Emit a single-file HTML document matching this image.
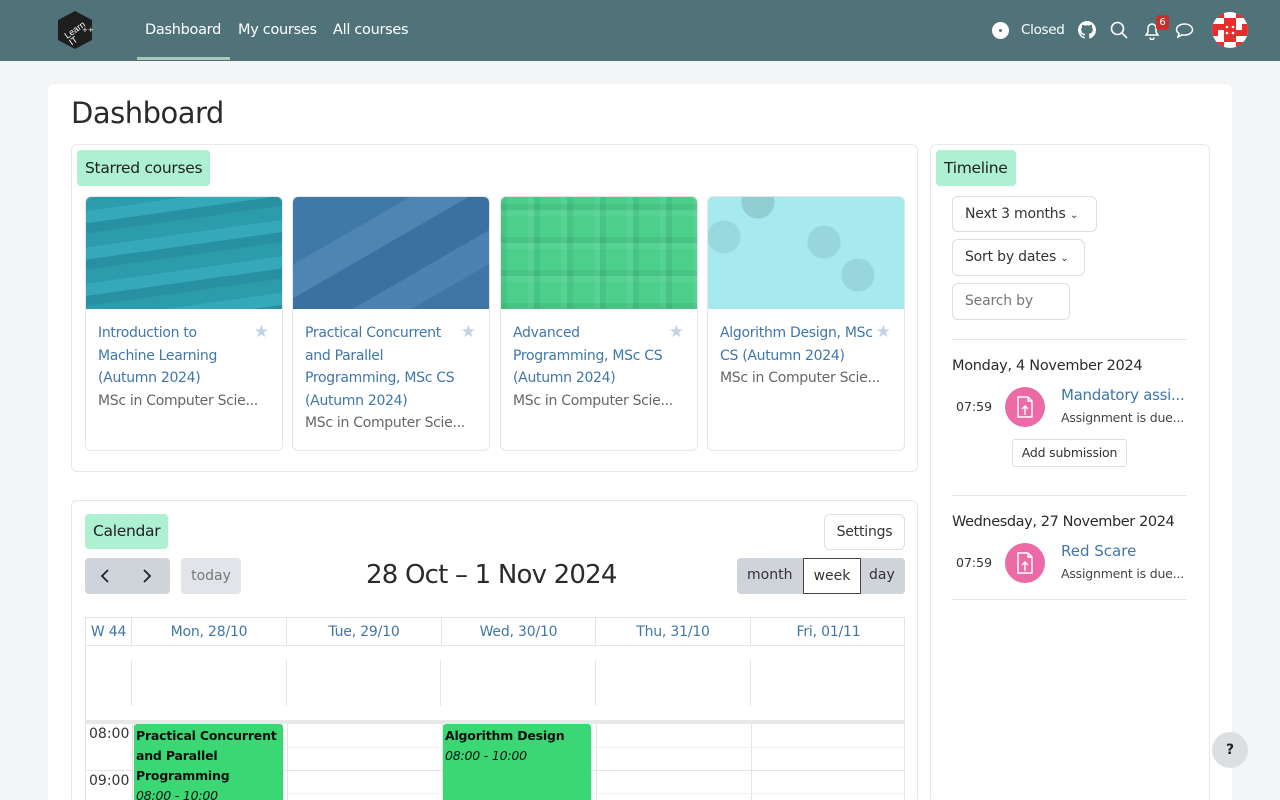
<!DOCTYPE html>
<html style="width:1280px;height:800px;overflow:hidden"><head><meta charset="utf-8"><style>
*{box-sizing:border-box;margin:0;padding:0}
body{width:1280px;height:800px;overflow:hidden;background:#f4f5f6;font-family:"DejaVu Sans","Liberation Sans",sans-serif;color:#333;position:relative;font-size:14px}
.abs{position:absolute}
.nav{left:0;top:0;width:1280px;height:61px;background:#50737a}
.nav a{position:absolute;top:22px;color:#fff;font-size:14.5px;letter-spacing:-.3px}
.main{left:48px;top:84px;width:1184px;height:716px;background:#fff;border-radius:6px 6px 0 0}
.blk{border:1px solid #e8e8e8;border-radius:6px;background:#fff}
.tag{background:#aef0d2;border-radius:4px;font-size:15.5px;color:#222;padding:0 8px;height:36px;line-height:36px;letter-spacing:-.3px}
.card{border:1px solid #e6e6e6;border-radius:6px;overflow:hidden;width:198px;height:255px;top:196px;background:#fff}
.card .img{height:112px}
.card .t{position:absolute;left:12px;top:125px;width:152px;color:#3f77aa;font-size:14px;line-height:22.6px;letter-spacing:-.3px}
.card .s{color:#666;white-space:nowrap}
.star{position:absolute;right:13px;top:125px;color:#bfd3e6;font-size:17px}
.btn{border:1px solid #dedede;border-radius:6px;background:#fff;font-size:14px;letter-spacing:-.2px}
.th{color:#3f77aa;font-size:14px;text-align:center;top:0;height:28px;line-height:28px;border-right:1px solid #e4e4e4;letter-spacing:-.2px}
.ev{background:#3ad774;border-radius:3px;font-size:12.5px;color:#111;padding:2px 2px;line-height:20px;letter-spacing:-.2px}
.ico{width:40px;height:40px;border-radius:50%;background:#ec6aa5}
</style></head><body>
<div class="abs nav">
  <svg class="abs" style="left:55px;top:10px" width="40" height="40" viewBox="0 0 40 40"><polygon points="20,1 37,10 37,30 20,39 3,30 3,10" fill="#1e1e1e"/><text x="8" y="24" font-size="9" fill="#fff" transform="rotate(-35 18 20)" font-family="Liberation Sans">Learn</text><text x="8" y="32" font-size="9" fill="#fff" transform="rotate(-35 18 20)" font-family="Liberation Sans">IT</text><text x="27" y="22" font-size="7" fill="#fff">++</text></svg>
  <a style="left:145px">Dashboard</a><a style="left:238px">My courses</a><a style="left:333px">All courses</a>
  <div class="abs" style="left:137px;top:57px;width:93px;height:3px;background:#a8cbb8"></div>
  <div class="abs" style="left:992px;top:22px;width:17px;height:17px;border-radius:50%;background:#fff"></div>
  <div class="abs" style="left:999px;top:29px;width:3px;height:3px;border-radius:50%;background:#50737a"></div>
  <a style="left:1021px;font-size:13.5px">Closed</a>
  <svg class="abs" style="left:1078px;top:21px" width="18" height="18" viewBox="0 0 16 16"><path fill="#fff" d="M8 0C3.6 0 0 3.6 0 8c0 3.5 2.3 6.5 5.5 7.6.4.1.5-.2.5-.4v-1.4c-2.2.5-2.7-1-2.7-1-.4-.9-.9-1.2-.9-1.2-.7-.5.1-.5.1-.5.8.1 1.2.8 1.2.8.7 1.2 1.9.9 2.3.7.1-.5.3-.9.5-1.1-1.8-.2-3.6-.9-3.6-4 0-.9.3-1.6.8-2.1-.1-.2-.4-1 .1-2.1 0 0 .7-.2 2.2.8.6-.2 1.3-.3 2-.3s1.4.1 2 .3c1.5-1 2.2-.8 2.2-.8.4 1.1.2 1.9.1 2.1.5.6.8 1.3.8 2.1 0 3.1-1.9 3.7-3.6 3.9.3.3.5.8.5 1.5v2.2c0 .2.1.5.6.4C13.7 14.5 16 11.5 16 8c0-4.4-3.6-8-8-8z"/></svg>
  <svg class="abs" style="left:1110px;top:21px" width="18" height="18" viewBox="0 0 18 18" fill="none" stroke="#fff" stroke-width="1.6"><circle cx="7.5" cy="7.5" r="6"/><path d="M12 12l5 5"/></svg>
  <svg class="abs" style="left:1143px;top:21px" width="18" height="19" viewBox="0 0 18 19" fill="none" stroke="#fff" stroke-width="1.5"><path d="M3 14h12l-2-3V7a4 4 0 0 0-8 0v4z"/><path d="M7 16.5a2 2 0 0 0 4 0"/></svg>
  <div class="abs" style="left:1156px;top:15px;width:13px;height:15px;background:#c8302d;border-radius:3px;color:#fff;font-size:10px;text-align:center;line-height:15px">6</div>
  <svg class="abs" style="left:1175px;top:22px" width="19" height="17" viewBox="0 0 19 17" fill="none" stroke="#fff" stroke-width="1.5"><path d="M9.5 2C5 2 1.5 4.5 1.5 7.5c0 1.6 1 3 2.5 4L3 15l4-2.2c.8.2 1.6.3 2.5.3 4.5 0 8-2.5 8-5.5S14 2 9.5 2z"/></svg>
  <svg class="abs" style="left:1212px;top:12px" width="36" height="36" viewBox="0 0 36 36"><clipPath id="c"><circle cx="18" cy="18" r="18"/></clipPath><g clip-path="url(#c)"><rect width="36" height="36" fill="#fff"/><path fill="#e82d2d" d="M0 0h12v6H0zM24 0h12v6H24zM12 6h12v6H12zM0 12h6v12H0zM30 12h6v12h-6zM6 12h6v6H6zM24 18h6v6h-6zM12 24h12v6H12zM0 30h12v6H0zM24 30h12v6H24zM12 12h12v12H12z"/><g fill="#fff"><circle cx="15" cy="15" r="1.3"/><circle cx="21" cy="15" r="1.3"/><circle cx="15" cy="21" r="1.3"/><circle cx="21" cy="21" r="1.3"/></g></g></svg>
</div>

<div class="abs main"></div>
<div class="abs" style="left:71px;top:96px;font-size:29px;color:#2b2b2b;letter-spacing:-.5px">Dashboard</div>

<div class="abs blk" style="left:71px;top:144px;width:847px;height:328px"></div>
<div class="abs tag" style="left:77px;top:150px">Starred courses</div>

<div class="abs card" style="left:85px"><div class="img" style="background:repeating-linear-gradient(172deg,#2c9bab 0 14px,#35a9ba 14px 26px,#2790a2 26px 36px)"></div><div class="t">Introduction to Machine Learning (Autumn 2024)<br><span class="s">MSc in Computer Scie...</span></div><span class="star">★</span></div>
<div class="abs card" style="left:292px"><div class="img" style="background:linear-gradient(150deg,#3e79a8 0 30%,#4d85b3 30% 45%,#3b71a0 45% 65%,#4a83b2 65% 80%,#3f76a6 80%)"></div><div class="t">Practical Concurrent and Parallel Programming, MSc CS (Autumn 2024)<br><span class="s">MSc in Computer Scie...</span></div><span class="star">★</span></div>
<div class="abs card" style="left:500px"><div class="img" style="background:#4bcf8b;background-image:repeating-linear-gradient(90deg,rgba(0,0,0,.06) 0 6px,transparent 6px 27px,rgba(255,255,255,.06) 27px 33px),repeating-linear-gradient(0deg,rgba(0,0,0,.06) 0 6px,transparent 6px 27px,rgba(255,255,255,.06) 27px 33px)"></div><div class="t">Advanced Programming, MSc CS (Autumn 2024)<br><span class="s">MSc in Computer Scie...</span></div><span class="star">★</span></div>
<div class="abs card" style="left:707px"><div class="img" style="background:#a6e9ee;background-image:radial-gradient(circle at 16px 40px,#97d9df 16px,transparent 17px),radial-gradient(circle at 116px 45px,#96d6dc 16px,transparent 17px),radial-gradient(circle at 150px 78px,#96d6dc 16px,transparent 17px),radial-gradient(circle at 50px 5px,#90ced3 16px,transparent 17px)"></div><div class="t" style="width:160px">Algorithm Design, MSc CS (Autumn 2024)<br><span class="s">MSc in Computer Scie...</span></div><span class="star">★</span></div>

<div class="abs blk" style="left:930px;top:144px;width:280px;height:660px"></div>
<div class="abs tag" style="left:936px;top:150px">Timeline</div>
<div class="abs btn" style="left:952px;top:196px;width:145px;height:36px;line-height:34px;padding-left:12px">Next 3 months <span style="font-size:10px">⌄</span></div>
<div class="abs btn" style="left:952px;top:239px;width:133px;height:37px;line-height:35px;padding-left:12px">Sort by dates <span style="font-size:10px">⌄</span></div>
<div class="abs btn" style="left:952px;top:283px;width:118px;height:37px;line-height:35px;padding-left:12px;color:#777">Search by</div>
<div class="abs" style="left:952px;top:339px;width:235px;height:1px;background:#e6e6e6"></div>
<div class="abs" style="left:952px;top:358px;font-size:14.5px;color:#2b2b2b;letter-spacing:-.3px">Monday, 4 November 2024</div>
<div class="abs" style="left:956px;top:399px;font-size:12.5px">07:59</div>
<div class="abs ico" style="left:1005px;top:387px"></div>
<svg class="abs" style="left:1015px;top:396px" width="20" height="22" viewBox="0 0 20 22" fill="none" stroke="#fff" stroke-width="1.4"><path d="M3 1h10l4 4v16H3z"/><path d="M13 1v4h4M10 19v-9M7 13l3-3 3 3"/></svg>
<div class="abs" style="left:1061px;top:386px;color:#3f77aa;font-size:15px;letter-spacing:-.3px">Mandatory assi...</div>
<div class="abs" style="left:1061px;top:410px;font-size:12.5px;color:#444;letter-spacing:-.2px">Assignment is due...</div>
<div class="abs btn" style="left:1012px;top:439px;width:115px;height:28px;line-height:26px;text-align:center;font-size:12.5px;border-radius:3px">Add submission</div>
<div class="abs" style="left:952px;top:495px;width:235px;height:1px;background:#e6e6e6"></div>
<div class="abs" style="left:952px;top:514px;font-size:14.5px;color:#2b2b2b;letter-spacing:-.4px">Wednesday, 27 November 2024</div>
<div class="abs" style="left:956px;top:555px;font-size:12.5px">07:59</div>
<div class="abs ico" style="left:1005px;top:543px"></div>
<svg class="abs" style="left:1015px;top:552px" width="20" height="22" viewBox="0 0 20 22" fill="none" stroke="#fff" stroke-width="1.4"><path d="M3 1h10l4 4v16H3z"/><path d="M13 1v4h4M10 19v-9M7 13l3-3 3 3"/></svg>
<div class="abs" style="left:1061px;top:542px;color:#3f77aa;font-size:15px">Red Scare</div>
<div class="abs" style="left:1061px;top:566px;font-size:12.5px;color:#444;letter-spacing:-.2px">Assignment is due...</div>
<div class="abs" style="left:952px;top:599px;width:235px;height:1px;background:#e6e6e6"></div>

<div class="abs blk" style="left:71px;top:500px;width:847px;height:304px"></div>
<div class="abs tag" style="left:85px;top:514px;height:35px;line-height:35px">Calendar</div>
<div class="abs btn" style="left:824px;top:514px;width:81px;height:36px;line-height:34px;text-align:center">Settings</div>
<div class="abs" style="left:85px;top:558px;width:85px;height:36px;background:#ced4da;border-radius:4px">
<svg class="abs" style="left:15px;top:11px" width="10" height="14" viewBox="0 0 10 14" fill="none" stroke="#222" stroke-width="1.8"><path d="M8 1L2 7l6 6"/></svg>
<svg class="abs" style="left:57px;top:11px" width="10" height="14" viewBox="0 0 10 14" fill="none" stroke="#222" stroke-width="1.8"><path d="M2 1l6 6-6 6"/></svg></div>
<div class="abs" style="left:181px;top:558px;width:60px;height:36px;background:#e1e4e8;border-radius:4px;color:#777;line-height:36px;text-align:center">today</div>
<div class="abs" style="left:366px;top:560px;font-size:26px;color:#2b2b2b;letter-spacing:-.8px">28 Oct – 1 Nov 2024</div>
<div class="abs" style="left:737px;top:558px;width:168px;height:36px;background:#ced4da;border-radius:4px"></div>
<div class="abs" style="left:747px;top:567px">month</div>
<div class="abs" style="left:803px;top:558px;width:58px;height:36px;background:#fff;border:1px solid #444;text-align:center;line-height:34px">week</div>
<div class="abs" style="left:869px;top:567px">day</div>

<div class="abs" style="left:85px;top:617px;width:820px;height:183px;border:1px solid #e4e4e4;border-bottom:0;overflow:hidden">
  <div class="abs th" style="left:0;width:46px">W 44</div>
  <div class="abs th" style="left:46px;width:155px">Mon, 28/10</div>
  <div class="abs th" style="left:201px;width:155px">Tue, 29/10</div>
  <div class="abs th" style="left:356px;width:154px">Wed, 30/10</div>
  <div class="abs th" style="left:510px;width:155px">Thu, 31/10</div>
  <div class="abs th" style="left:665px;width:155px;border:0">Fri, 01/11</div>
  <div class="abs" style="left:0;top:27px;width:820px;height:1px;background:#e4e4e4"></div>
  <div class="abs" style="left:45px;top:42px;width:620px;height:46px;border-left:1px solid #e4e4e4;border-right:1px solid #e4e4e4"></div>
  <div class="abs" style="left:200px;top:42px;width:155px;height:46px;border-left:1px solid #e4e4e4;border-right:1px solid #e4e4e4"></div>
  <div class="abs" style="left:509px;top:42px;width:1px;height:46px;background:#e4e4e4"></div>
  <div class="abs" style="left:0;top:102px;width:820px;height:4px;background:#e8e8e8"></div>
  <div class="abs" style="left:46px;top:106px;width:1px;height:100px;background:#e4e4e4"></div>
  <div class="abs" style="left:201px;top:106px;width:1px;height:100px;background:#e4e4e4"></div>
  <div class="abs" style="left:356px;top:106px;width:1px;height:100px;background:#e4e4e4"></div>
  <div class="abs" style="left:510px;top:106px;width:1px;height:100px;background:#e4e4e4"></div>
  <div class="abs" style="left:665px;top:106px;width:1px;height:100px;background:#e4e4e4"></div>
  <div class="abs" style="left:46px;top:129px;width:774px;height:1px;background:#f0f0f0"></div>
  <div class="abs" style="left:0;top:152px;width:820px;height:1px;background:#e4e4e4"></div>
  <div class="abs" style="left:46px;top:175px;width:774px;height:1px;background:#f0f0f0"></div>
  <div class="abs" style="left:3px;top:108px;font-size:14px">08:00</div>
  <div class="abs" style="left:3px;top:155px;font-size:14px">09:00</div>
  <div class="abs ev" style="left:48px;top:106px;width:149px;height:100px"><b style="font-weight:600">Practical Concurrent and Parallel Programming</b><br><i>08:00 - 10:00</i></div>
  <div class="abs ev" style="left:357px;top:106px;width:148px;height:100px"><b style="font-weight:600">Algorithm Design</b><br><i>08:00 - 10:00</i></div>
</div>

<div class="abs" style="left:1212px;top:732px;width:36px;height:36px;border-radius:50%;background:#dcdfe2;text-align:center;line-height:36px;font-weight:bold;color:#222">?</div>
</body></html>
